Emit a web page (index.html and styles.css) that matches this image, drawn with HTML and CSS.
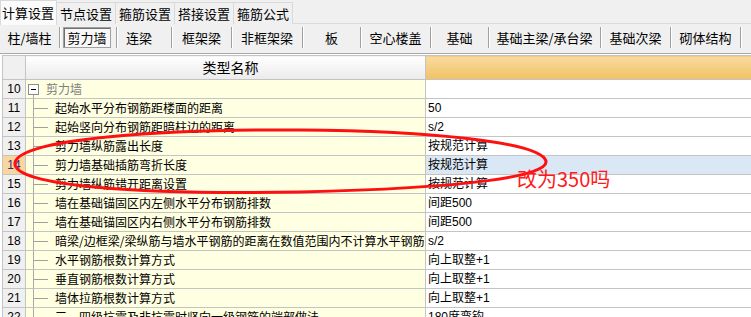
FILE: index.html
```html
<!DOCTYPE html>
<html lang="zh-CN">
<head>
    <meta charset="UTF-8">
    <meta name="viewport" content="width=device-width, initial-scale=1.0">
    <title>计算设置 - 剪力墙</title>
    <link rel="stylesheet" href="styles.css">
</head>
<body>
    <!-- Top tabs -->
    <div class="tabs">
        <div class="tab active">计算设置</div>
        <div class="tab">节点设置</div>
        <div class="tab">箍筋设置</div>
        <div class="tab">搭接设置</div>
        <div class="tab">箍筋公式</div>
    </div>

    <!-- Member type toolbar -->
    <div class="toolbar">
        <div class="tool">柱/墙柱</div>
        <div class="tool"><span class="pressed">剪力墙</span></div>
        <div class="tool tool-shift">连梁</div>
        <div class="tool">框架梁</div>
        <div class="tool">非框架梁</div>
        <div class="tool">板</div>
        <div class="tool">空心楼盖</div>
        <div class="tool">基础</div>
        <div class="tool">基础主梁/承台梁</div>
        <div class="tool">基础次梁</div>
        <div class="tool">砌体结构</div>
    </div>

    <!-- Settings grid -->
    <div class="grid-wrap">
        <table class="grid">
            <colgroup>
                <col class="col-num">
                <col class="col-name">
                <col class="col-val">
            </colgroup>
            <tr class="head">
                <th class="num"></th>
                <th class="name-head">类型名称</th>
                <th class="val-head"></th>
            </tr>
            <tr>
                <td class="num">10</td>
                <td class="name group"><span class="fold"></span>剪力墙</td>
                <td class="val"></td>
            </tr>
            <tr>
                <td class="num">11</td>
                <td class="name">起始水平分布钢筋距楼面的距离</td>
                <td class="val">50</td>
            </tr>
            <tr>
                <td class="num">12</td>
                <td class="name">起始竖向分布钢筋距暗柱边的距离</td>
                <td class="val">s/2</td>
            </tr>
            <tr>
                <td class="num">13</td>
                <td class="name">剪力墙纵筋露出长度</td>
                <td class="val">按规范计算</td>
            </tr>
            <tr class="selected">
                <td class="num">14</td>
                <td class="name">剪力墙基础插筋弯折长度</td>
                <td class="val">按规范计算</td>
            </tr>
            <tr>
                <td class="num">15</td>
                <td class="name">剪力墙纵筋错开距离设置</td>
                <td class="val">按规范计算</td>
            </tr>
            <tr>
                <td class="num">16</td>
                <td class="name">墙在基础锚固区内左侧水平分布钢筋排数</td>
                <td class="val">间距500</td>
            </tr>
            <tr>
                <td class="num">17</td>
                <td class="name">墙在基础锚固区内右侧水平分布钢筋排数</td>
                <td class="val">间距500</td>
            </tr>
            <tr>
                <td class="num">18</td>
                <td class="name">暗梁/边框梁/梁纵筋与墙水平钢筋的距离在数值范围内不计算水平钢筋</td>
                <td class="val">s/2</td>
            </tr>
            <tr>
                <td class="num">19</td>
                <td class="name">水平钢筋根数计算方式</td>
                <td class="val">向上取整+1</td>
            </tr>
            <tr>
                <td class="num">20</td>
                <td class="name">垂直钢筋根数计算方式</td>
                <td class="val">向上取整+1</td>
            </tr>
            <tr>
                <td class="num">21</td>
                <td class="name">墙体拉筋根数计算方式</td>
                <td class="val">向上取整+1</td>
            </tr>
            <tr>
                <td class="num">22</td>
                <td class="name">三、四级抗震及非抗震时竖向一级钢筋的端部做法</td>
                <td class="val">180度弯钩</td>
            </tr>
        </table>
    </div>

    <!-- Hand-drawn markup on top of the screenshot -->
    <svg class="mark" width="751" height="317" viewBox="0 0 751 317">
        <path d="M15,163 C18,138 170,129 300,130 C430,131 540,142 546,161 C549,176 470,188 300,192 C140,195 12,186 15,163 Z"
              fill="none" stroke="#ff1010" stroke-width="3"/>
    </svg>
    <div class="note">改为350吗</div>
</body>
</html>
```

FILE: styles.css
```css
body {
    margin: 0;
    width: 751px;
    height: 317px;
    overflow: hidden;
    position: relative;
    background: #f0f0f0;
    font-family: "Noto Sans CJK SC", sans-serif;
    font-size: 12px;
    color: #000;
}

/* tabs */
.tabs {
    display: flex;
    height: 23px;
    border-bottom: 1px solid #dadada;
}
.tab {
    margin-top: 2px;
    padding: 0 3px;
    height: 21px;
    line-height: 21px;
    font-size: 13px;
    border: 1px solid #d9d9d9;
    border-bottom: none;
    border-left: none;
    background: #f0f0f0;
}
.tab.active {
    margin-top: 0;
    height: 24px;
    line-height: 23px;
    background: #fbfbfb;
    border-left: 1px solid #d9d9d9;
    padding: 0 2px 0 1px;
}

/* toolbar */
.toolbar {
    display: grid;
    grid-template-columns: 60px 57px 55px 60px 71px 58px 70px 58px 112px 70px 70px;
    height: 30px;
    padding-top: 3px;
    box-sizing: border-box;
    border-bottom: 1px solid #a8a8a8;
}
.tool {
    height: 21px;
    line-height: 21px;
    font-size: 13px;
    text-align: center;
    border-right: 1px solid #a0a0a0;
    box-shadow: 1px 0 0 #fff;
}
.tool-shift {
    padding-right: 10px;
}
.pressed {
    display: block;
    margin: 0 5px 0 3px;
    height: 19px;
    line-height: 19px;
    border: 1px solid #a0a0a0;
    box-shadow: inset 1px 1px 0 #707070;
    background: #f8f8f8;
}

/* grid */
.grid-wrap {
    padding: 1px 0 0 2px;
    background: #fff;
}
.grid {
    border-collapse: collapse;
    table-layout: fixed;
    width: 760px;
}
.col-num { width: 23px; }
.col-name { width: 400px; }
.col-val { width: 337px; }

.grid th,
.grid td {
    border: 1px solid #c4c4c4;
    padding: 0;
    height: 18px;
    line-height: 18px;
    white-space: nowrap;
    overflow: hidden;
    font-weight: normal;
}
.grid .head th {
    height: 23px;
    line-height: 23px;
}
.name-head {
    padding-left: 10px !important;
    font-size: 14px;
    text-align: center;
    background: linear-gradient(#ffffff, #ebebeb);
}
.val-head {
    background: linear-gradient(#f9da9f, #f1c265);
}
.num {
    background: #f0f0f0;
    text-align: center;
    font-family: "Liberation Sans", sans-serif;
    font-size: 12px;
}
.name {
    padding-left: 29px !important;
    background:
        linear-gradient(#a8a8a8, #a8a8a8) 7px 0 / 1px 100% no-repeat,
        linear-gradient(#a0a0a0, #a0a0a0) 7px 9px / 15px 1px no-repeat,
        #ffffe1;
}
.name.group {
    padding-left: 2px !important;
    color: #808080;
    background:
        linear-gradient(#a8a8a8, #a8a8a8) 7px 13px / 1px 6px no-repeat,
        #ffffe1;
}
.fold {
    display: inline-block;
    position: relative;
    width: 9px;
    height: 9px;
    margin-right: 7px;
    vertical-align: -1px;
    border: 1px solid #8c8c8c;
    background: #fff;
}
.fold::after {
    content: "";
    position: absolute;
    left: 2px;
    top: 4px;
    width: 5px;
    height: 1px;
    background: #000;
}
.val {
    padding-left: 2px !important;
    background: #fff;
    font-family: "Liberation Sans", "Noto Sans CJK SC", sans-serif;
    font-size: 12px;
}
.selected .num {
    background: #f9d69e;
    color: #3a2a80;
}
.selected .val {
    background: #dae7f5;
}

/* markup overlay */
.mark {
    position: absolute;
    left: 0;
    top: 0;
    pointer-events: none;
}
.note {
    position: absolute;
    left: 517px;
    top: 168px;
    font-size: 20px;
    line-height: 22px;
    color: #ff1a1a;
}
```
